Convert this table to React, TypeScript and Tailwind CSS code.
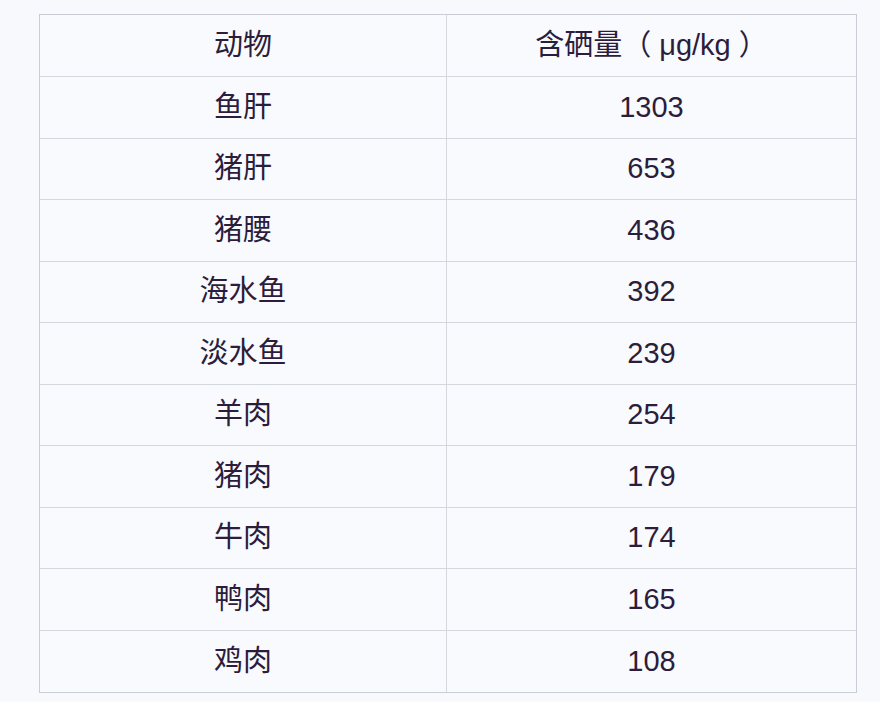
import React from 'react';

const ROWS: [string, string][] = [
  ['鱼肝', '1303'],
  ['猪肝', '653'],
  ['猪腰', '436'],
  ['海水鱼', '392'],
  ['淡水鱼', '239'],
  ['羊肉', '254'],
  ['猪肉', '179'],
  ['牛肉', '174'],
  ['鸭肉', '165'],
  ['鸡肉', '108'],
];

export default function App() {
  return (
    <div
      className="w-[880px] h-[702px] bg-[#f8f9fc] pt-[14px] pl-[39px] text-[#2b1d3b] text-[29px]"
      style={{ fontFamily: '"Liberation Sans", "Noto Sans CJK SC", sans-serif' }}
    >
      <div className="w-[818px] border border-[#c9cdd5] bg-[#f9fafd]">
        <div className="grid grid-cols-[407px_1fr] h-[62px] border-b border-[#d3d7de]">
          <div className="flex items-center justify-center border-r border-[#d3d7de]">动物</div>
          <div className="flex items-center justify-center">含硒量（ μg/kg ）</div>
        </div>
        {ROWS.map(([name, value], i) => (
          <div
            key={name}
            className={`grid grid-cols-[407px_1fr] h-[61.5px] ${i < ROWS.length - 1 ? 'border-b border-[#d3d7de]' : ''}`}
          >
            <div className="flex items-center justify-center border-r border-[#d3d7de]">{name}</div>
            <div className="flex items-center justify-center">{value}</div>
          </div>
        ))}
      </div>
    </div>
  );
}
